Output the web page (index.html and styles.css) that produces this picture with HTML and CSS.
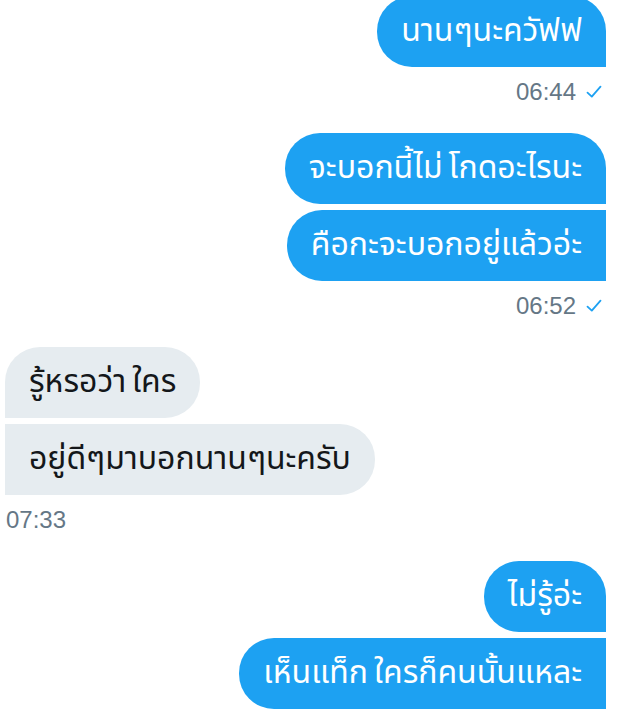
FILE: index.html
```html
<!DOCTYPE html>
<html lang="th">
<head>
<meta charset="utf-8">
<link rel="stylesheet" href="styles.css">
</head>
<body>
<div class="chat">
  <div class="group sent first">
    <div class="bubble solo">นานๆนะควัฟฟ</div>
    <div class="meta"><span class="time">06:44</span><svg class="check" viewBox="0 0 16 16" width="16" height="16"><path d="M1.5 8.6 L5.8 12.6 L14.5 2.6" fill="none" stroke="#1da1f2" stroke-width="1.8" stroke-linecap="round" stroke-linejoin="round"/></svg></div>
  </div>
  <div class="group sent">
    <div class="bubble top">จะบอกนี้ไม่<span class="lead">โกดอะไรนะ</span></div>
    <div class="bubble mid">คือกะจะบอกอยู่แล้วอ่ะ</div>
    <div class="meta"><span class="time">06:52</span><svg class="check" viewBox="0 0 16 16" width="16" height="16"><path d="M1.5 8.6 L5.8 12.6 L14.5 2.6" fill="none" stroke="#1da1f2" stroke-width="1.8" stroke-linecap="round" stroke-linejoin="round"/></svg></div>
  </div>
  <div class="group received">
    <div class="bubble top">รู้หรอว่า<span class="lead">ใคร</span></div>
    <div class="bubble mid">อยู่ดีๆมาบอกนานๆนะครับ</div>
    <div class="meta"><span class="time">07:33</span></div>
  </div>
  <div class="group sent">
    <div class="bubble top">ไม่รู้อ่ะ</div>
    <div class="bubble mid">เห็นแท็ก<span class="lead">ใครก็คนนั้นแหละ</span></div>
  </div>
</div>
</body>
</html>
```
FILE: styles.css
```css
html, body {
  margin: 0;
  padding: 0;
  background: #ffffff;
  overflow: hidden;
}
.chat {
  display: flex;
  flex-direction: column;
  padding: 0 31px 0 5px;
  font-family: "Noto Sans Thai", "Noto Sans", "Liberation Sans", sans-serif;
}
.group {
  display: flex;
  flex-direction: column;
  gap: 6px;
  margin-bottom: 26px;
}
.group.first {
  margin-top: -4px;
}
.sent {
  align-items: flex-end;
}
.received {
  align-items: flex-start;
}
.bubble {
  height: 71px;
  line-height: 71px;
  padding: 0 24px;
  font-size: 32px;
  white-space: nowrap;
  box-sizing: border-box;
}
.lead {
  margin-left: 6px;
}
.sent .bubble {
  background: #1da1f2;
  color: #ffffff;
}
.received .bubble {
  background: #e6ecf0;
  color: #14171a;
}
.sent .bubble.solo,
.sent .bubble.top {
  border-radius: 35px 35px 0 35px;
}
.sent .bubble.mid {
  border-radius: 35px 0 0 35px;
}
.received .bubble.top {
  border-radius: 35px 35px 35px 0;
}
.received .bubble.mid {
  border-radius: 0 35px 35px 0;
}
.meta {
  display: flex;
  align-items: center;
  gap: 10px;
  height: 30px;
  margin-top: 4px;
  font-family: "Liberation Sans", Arial, sans-serif;
  font-size: 24px;
  color: #657786;
}
.sent .meta {
  margin-right: 4px;
}
.received .meta {
  margin-left: 1px;
}
.check {
  display: block;
}
```
